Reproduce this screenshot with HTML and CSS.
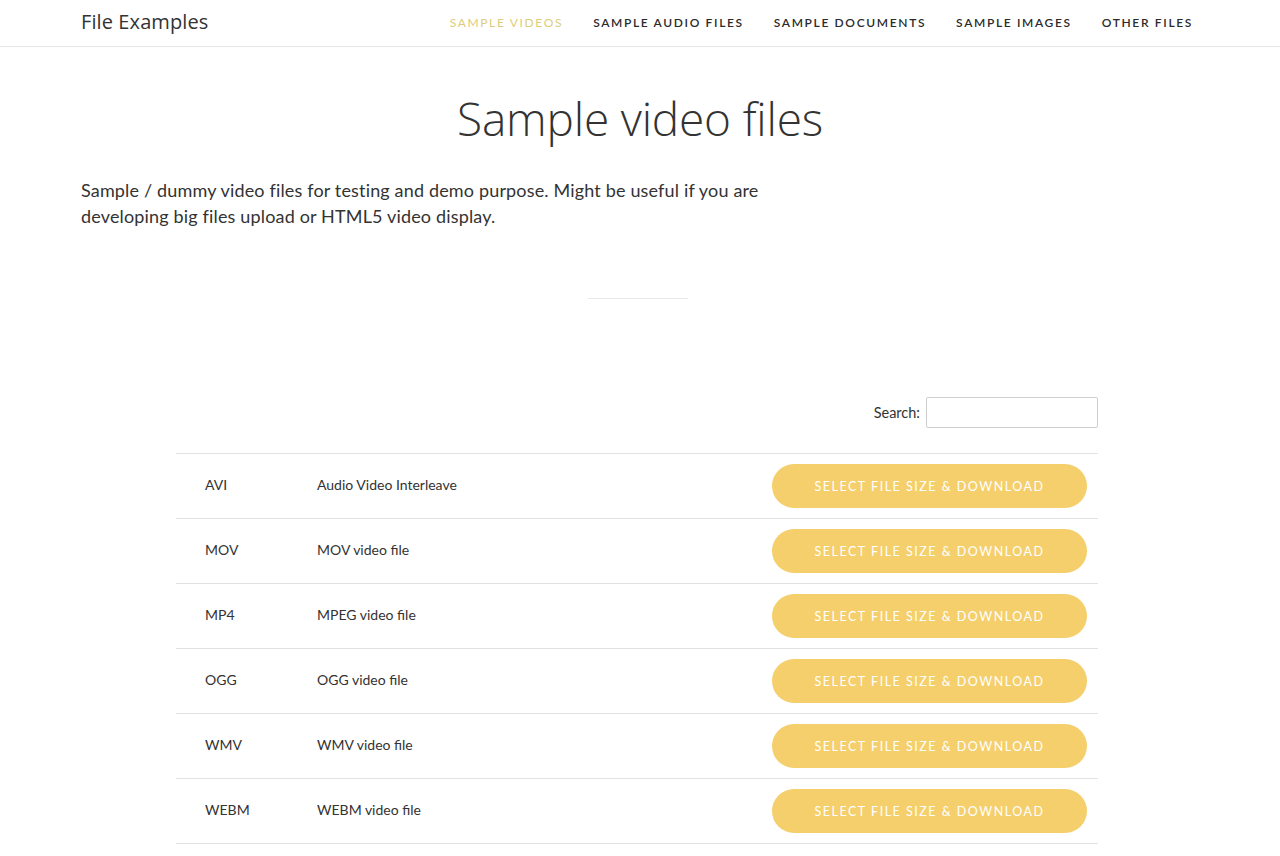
FILE: index.html
```html
<!DOCTYPE html>
<html lang="en">
<head>
<meta charset="utf-8">
<title>Sample video files</title>
<link rel="stylesheet" href="styles.css">
</head>
<body>
<header class="site-header">
  <div class="header-inner">
    <a class="logo" href="#">File Examples</a>
    <nav class="main-nav">
      <a class="nav-link active" href="#">Sample Videos</a>
      <a class="nav-link" href="#">Sample Audio Files</a>
      <a class="nav-link" href="#">Sample Documents</a>
      <a class="nav-link" href="#">Sample Images</a>
      <a class="nav-link" href="#">Other Files</a>
    </nav>
  </div>
</header>
<main class="content">
  <h1 class="page-title">Sample video files</h1>
  <p class="intro">Sample / dummy video files for testing and demo purpose. Might be useful if you are developing big files upload or HTML5 video display.</p>
  <hr class="separator">
  <section class="table-wrap">
    <div class="search-row">
      <label class="search-label">Search: <input class="search-input" type="text"></label>
    </div>
    <table class="files">
      <tbody>
        <tr><td class="c-ext">AVI</td><td class="c-name">Audio Video Interleave</td><td class="c-btn"><a class="btn" href="#">Select file size &amp; download</a></td></tr>
        <tr><td class="c-ext">MOV</td><td class="c-name">MOV video file</td><td class="c-btn"><a class="btn" href="#">Select file size &amp; download</a></td></tr>
        <tr><td class="c-ext">MP4</td><td class="c-name">MPEG video file</td><td class="c-btn"><a class="btn" href="#">Select file size &amp; download</a></td></tr>
        <tr><td class="c-ext">OGG</td><td class="c-name">OGG video file</td><td class="c-btn"><a class="btn" href="#">Select file size &amp; download</a></td></tr>
        <tr><td class="c-ext">WMV</td><td class="c-name">WMV video file</td><td class="c-btn"><a class="btn" href="#">Select file size &amp; download</a></td></tr>
        <tr><td class="c-ext">WEBM</td><td class="c-name">WEBM video file</td><td class="c-btn"><a class="btn" href="#">Select file size &amp; download</a></td></tr>
      </tbody>
    </table>
  </section>
</main>
</body>
</html>
```

FILE: styles.css
```css
* { box-sizing: border-box; }
html, body { margin: 0; padding: 0; background: #fff; }
body {
  font-family: Lato, "Open Sans", sans-serif;
  color: #333;
}
a { text-decoration: none; }

.site-header {
  height: 47px;
  border-bottom: 1px solid #e6e6e6;
}
.header-inner {
  width: 1118px;
  margin: 0 auto;
  height: 46px;
  display: flex;
  align-items: center;
  justify-content: space-between;
}
.logo {
  font-family: "Open Sans", sans-serif;
  font-size: 20px;
  color: #333;
  letter-spacing: 0.1px;
  margin-top: -4px;
}
.main-nav {
  display: flex;
  gap: 30px;
  padding-right: 6px;
  margin-top: -2px;
}
.nav-link {
  font-family: Lato, sans-serif;
  font-size: 12px;
  letter-spacing: 1.65px;
  text-transform: uppercase;
  color: #2b2b2b;
  font-weight: 600;
}
.nav-link.active {
  color: #dccd7c;
  font-weight: 400;
}

.content {
  width: 1118px;
  margin: 0 auto;
}
.page-title {
  font-family: "Open Sans", sans-serif;
  font-weight: 300;
  font-size: 46px;
  color: #333;
  text-align: center;
  margin: 40px 0 0;
  line-height: 62px;
  letter-spacing: -0.2px;
}
.intro {
  font-family: Lato, sans-serif;
  font-size: 18px;
  letter-spacing: 0.16px;
  line-height: 26px;
  color: #333;
  width: 700px;
  margin: 28px 0 0;
}
.separator {
  width: 100px;
  border: 0;
  border-top: 1px solid #e8e8e8;
  margin: 69px 0 0 507px;
}

.table-wrap {
  width: 922px;
  margin: 98px 0 0 95px;
}
.search-row {
  display: flex;
  justify-content: flex-end;
  height: 56px;
}
.search-label {
  font-family: Lato, sans-serif;
  font-size: 14.5px;
  color: #333;
  display: flex;
  align-items: center;
  gap: 6px;
  height: 31px;
}
.search-input {
  width: 172px;
  height: 31px;
  border: 1px solid #cfcfcf;
  border-radius: 2px;
  padding: 0 6px;
}
.files {
  width: 100%;
  border-collapse: collapse;
  border-top: 1px solid #e2e2e2;
}
.files td {
  height: 65px;
  border-bottom: 1px solid #e2e2e2;
  font-family: Lato, sans-serif;
  font-size: 14px;
  color: #333;
  padding: 0 0 3px;
  vertical-align: middle;
}
.c-ext { width: 141px; padding-left: 29px !important; }
.c-btn { text-align: right; padding: 0 11px 0 0 !important; }
.btn {
  display: inline-flex;
  align-items: center;
  justify-content: center;
  width: 315px;
  height: 44px;
  border-radius: 22px;
  background: #f5cf6b;
  color: #fff;
  font-family: Lato, sans-serif;
  font-size: 12.5px;
  font-weight: 400;
  letter-spacing: 1.5px;
  text-transform: uppercase;
}
```
